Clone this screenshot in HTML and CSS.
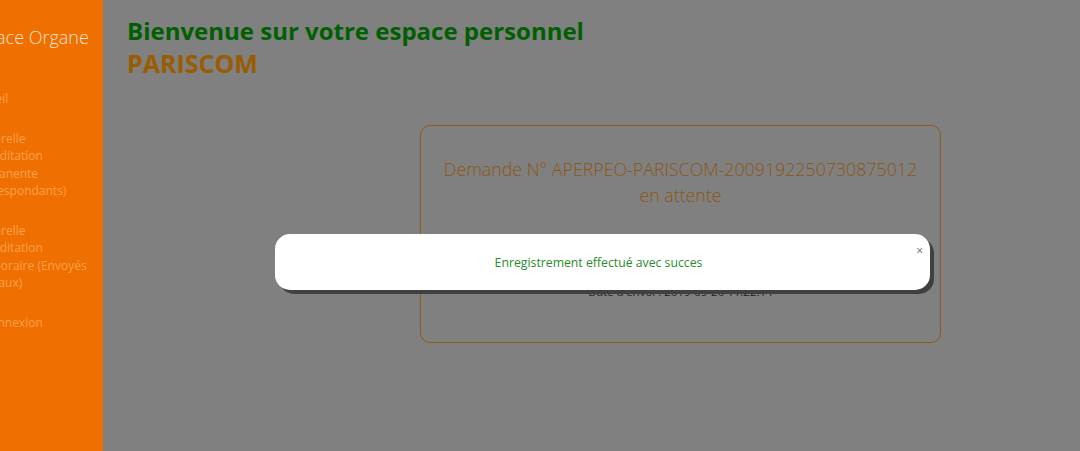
FILE: index.html
```html
<!DOCTYPE html>
<html lang="fr">
<head>
<meta charset="utf-8">
<title>Espace Organe</title>
<link rel="stylesheet" href="styles.css">
</head>
<body>
<div class="layout">
  <aside class="sidebar">
    <div class="brand">Espace Organe</div>
    <ul class="nav">
      <li>Accueil</li>
      <li>Passerelle<br>Accréditation<br>Permanente<br>(Correspondants)</li>
      <li>Passerelle<br>Accréditation<br>Temporaire (Envoyés<br>Spéciaux)</li>
      <li>Déconnexion</li>
    </ul>
  </aside>
  <main class="main">
    <h1 class="welcome">Bienvenue sur votre espace personnel</h1>
    <h2 class="org">PARISCOM</h2>
    <section class="card">
      <p class="card-title">Demande N° APERPEO-PARISCOM-2009192250730875012<br>en attente</p>
      <p class="card-date">Date d'envoi : 2019-09-20 11:22:14</p>
    </section>
    <div class="modal">
      <p class="modal-text">Enregistrement effectué avec succes</p>
      <span class="modal-close">×</span>
    </div>
  </main>
</div>
</body>
</html>
```
FILE: styles.css
```css
html, body {
  margin: 0;
  height: 100%;
  overflow: hidden;
}
body {
  font-family: "Open Sans", "Noto Sans", sans-serif;
  background: #808080;
}
.layout {
  display: grid;
  grid-template-columns: 103px 1fr;
  height: 451px;
}
.sidebar {
  background: #ef6f00;
  overflow: hidden;
  white-space: nowrap;
}
.brand {
  margin: 24px 0 0 -33px;
  font-size: 18px;
  font-weight: 300;
  color: #fde3cc;
  line-height: 26px;
}
.nav {
  list-style: none;
  margin: 40px 0 0 -31px;
  padding: 0;
  font-size: 12px;
  line-height: 17.5px;
  color: #fca04c;
}
.nav li {
  margin-bottom: 22px;
}
.main {
  position: relative;
  padding: 14px 0 0 24px;
}
.welcome {
  margin: 0;
  font-size: 24px;
  font-weight: 700;
  line-height: 34px;
  color: #005f00;
}
.org {
  margin: 0;
  font-size: 25px;
  font-weight: 700;
  line-height: 30px;
  color: #9a5c00;
}
.card {
  margin: 47px 0 0 293px;
  width: 521px;
  height: 218px;
  box-sizing: border-box;
  border: 1.5px solid #8f5a13;
  border-radius: 10px;
  text-align: center;
}
.card-title {
  margin: 30px 0 0;
  font-size: 17.8px;
  font-weight: 300;
  line-height: 26px;
  color: #8c5614;
}
.card-date {
  margin: 76px 0 0;
  font-size: 11.5px;
  color: #222;
}
.modal {
  position: absolute;
  left: 172px;
  top: 234px;
  width: 655px;
  height: 56px;
  background: #fff;
  border-radius: 15px;
  box-shadow: 4px 4px 0 #404040;
  display: flex;
  align-items: center;
  justify-content: center;
}
.modal-text {
  margin: 0 8px 0 0;
  font-size: 12.25px;
  color: #2a8c2a;
}
.modal-close {
  position: absolute;
  right: 7px;
  top: 8px;
  font-size: 12px;
  color: #667;
}
```
